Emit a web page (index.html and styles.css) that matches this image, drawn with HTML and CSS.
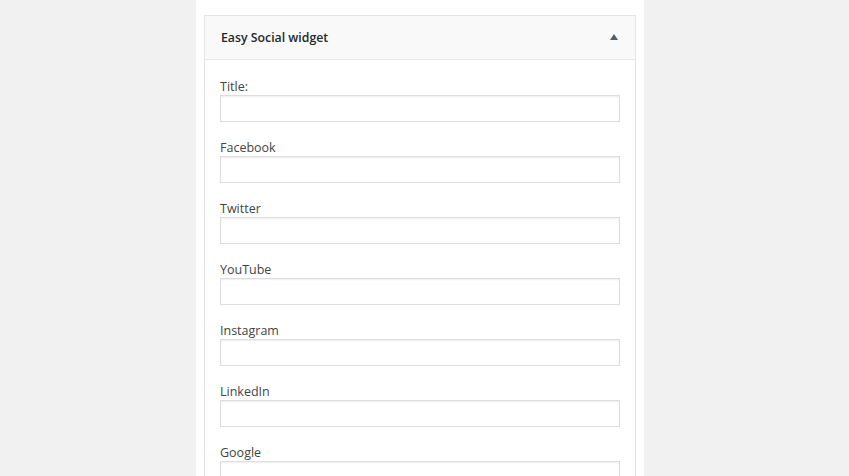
FILE: index.html
```html
<!DOCTYPE html>
<html lang="en">
<head>
<meta charset="utf-8">
<title>Easy Social widget</title>
<link rel="stylesheet" href="styles.css">
</head>
<body>
<div class="column">
  <div class="widget">
    <div class="widget-top">
      <h3 class="widget-title">Easy Social widget</h3>
      <span class="toggle" aria-hidden="true"></span>
    </div>
    <div class="widget-inside">
      <p class="field"><label for="f-title">Title:</label><input id="f-title" type="text"></p>
      <p class="field"><label for="f-fb">Facebook</label><input id="f-fb" type="text"></p>
      <p class="field"><label for="f-tw">Twitter</label><input id="f-tw" type="text"></p>
      <p class="field"><label for="f-yt">YouTube</label><input id="f-yt" type="text"></p>
      <p class="field"><label for="f-ig">Instagram</label><input id="f-ig" type="text"></p>
      <p class="field"><label for="f-li">LinkedIn</label><input id="f-li" type="text"></p>
      <p class="field"><label for="f-go">Google</label><input id="f-go" type="text"></p>
    </div>
  </div>
</div>
</body>
</html>
```
FILE: styles.css
```css
html, body {
  margin: 0;
  padding: 0;
  height: 100%;
  overflow: hidden;
}
body {
  background: #f1f1f1;
  font-family: "Open Sans", "Noto Sans", sans-serif;
  color: #23282d;
}
.column {
  width: 432px;
  margin-left: 196px;
  padding: 15px 8px 0;
  background: #fff;
  min-height: 100%;
}
.widget {
  border: 1px solid #e5e5e5;
  background: #fff;
}
.widget-top {
  height: 43px;
  background: #f9f9f9;
  border-bottom: 1px solid #e5e5e5;
  display: flex;
  align-items: center;
  justify-content: space-between;
  padding: 0 16px 0 16px;
}
.widget-title {
  margin: 0;
  font-size: 12.3px;
  font-weight: 600;
  line-height: 18px;
  color: #23282d;
}
.toggle {
  width: 0;
  height: 0;
  border-left: 4.5px solid transparent;
  border-right: 4.5px solid transparent;
  border-bottom: 6px solid #555d66;
  margin-right: 1px;
  margin-top: -2px;
}
.widget-inside {
  padding: 17px 15px 0;
}
.field {
  margin: 0 0 16px;
}
.field label {
  display: block;
  height: 18px;
  font-size: 12.5px;
  line-height: 20px;
  color: #444;
}
.field input {
  display: block;
  box-sizing: border-box;
  width: 400px;
  height: 27px;
  margin: 0;
  border: 1px solid #ddd;
  background: #fff;
  box-shadow: inset 0 1px 2px rgba(0,0,0,0.07);
  font-family: inherit;
  font-size: 14px;
}
```
